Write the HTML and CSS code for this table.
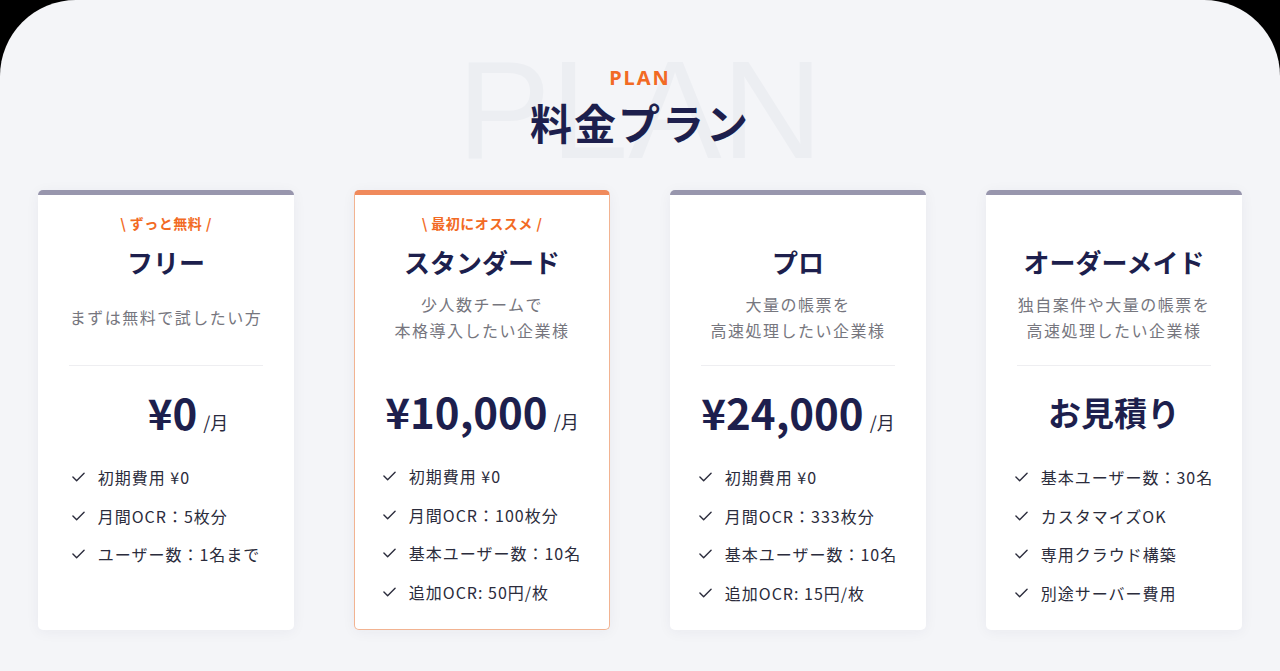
FILE: index.html
```html
<!DOCTYPE html>
<html lang="ja">
<head>
<meta charset="utf-8">
<title>料金プラン</title>
<link rel="stylesheet" href="styles.css">
</head>
<body>
<main class="page">
  <header class="head">
    <span class="head-ghost" aria-hidden="true">PLAN</span>
    <p class="head-label">PLAN</p>
    <h1 class="head-title">料金プラン</h1>
  </header>
  <section class="plans">
    <article class="card">
      <p class="card-tag">\ ずっと無料 /</p>
      <h2 class="card-title">フリー</h2>
      <div class="card-desc"><p>まずは無料で試したい方</p></div>
      <hr class="card-rule">
      <p class="price price--free"><span class="price-num">¥0</span><span class="price-unit">/月</span></p>
      <ul class="features">
        <li><svg class="check" viewBox="0 0 14 10"><polyline points="1,5 5,9 13,1"/></svg>初期費用 ¥0</li>
        <li><svg class="check" viewBox="0 0 14 10"><polyline points="1,5 5,9 13,1"/></svg>月間OCR：5枚分</li>
        <li><svg class="check" viewBox="0 0 14 10"><polyline points="1,5 5,9 13,1"/></svg>ユーザー数：1名まで</li>
      </ul>
    </article>
    <article class="card card--featured">
      <p class="card-tag">\ 最初にオススメ /</p>
      <h2 class="card-title">スタンダード</h2>
      <div class="card-desc"><p>少人数チームで<br>本格導入したい企業様</p></div>
      <hr class="card-rule">
      <p class="price"><span class="price-num">¥10,000</span><span class="price-unit">/月</span></p>
      <ul class="features">
        <li><svg class="check" viewBox="0 0 14 10"><polyline points="1,5 5,9 13,1"/></svg>初期費用 ¥0</li>
        <li><svg class="check" viewBox="0 0 14 10"><polyline points="1,5 5,9 13,1"/></svg>月間OCR：100枚分</li>
        <li><svg class="check" viewBox="0 0 14 10"><polyline points="1,5 5,9 13,1"/></svg>基本ユーザー数：10名</li>
        <li><svg class="check" viewBox="0 0 14 10"><polyline points="1,5 5,9 13,1"/></svg>追加OCR: 50円/枚</li>
      </ul>
    </article>
    <article class="card">
      <p class="card-tag"></p>
      <h2 class="card-title">プロ</h2>
      <div class="card-desc"><p>大量の帳票を<br>高速処理したい企業様</p></div>
      <hr class="card-rule">
      <p class="price"><span class="price-num">¥24,000</span><span class="price-unit">/月</span></p>
      <ul class="features">
        <li><svg class="check" viewBox="0 0 14 10"><polyline points="1,5 5,9 13,1"/></svg>初期費用 ¥0</li>
        <li><svg class="check" viewBox="0 0 14 10"><polyline points="1,5 5,9 13,1"/></svg>月間OCR：333枚分</li>
        <li><svg class="check" viewBox="0 0 14 10"><polyline points="1,5 5,9 13,1"/></svg>基本ユーザー数：10名</li>
        <li><svg class="check" viewBox="0 0 14 10"><polyline points="1,5 5,9 13,1"/></svg>追加OCR: 15円/枚</li>
      </ul>
    </article>
    <article class="card">
      <p class="card-tag"></p>
      <h2 class="card-title">オーダーメイド</h2>
      <div class="card-desc"><p>独自案件や大量の帳票を<br>高速処理したい企業様</p></div>
      <hr class="card-rule">
      <p class="price"><span class="price-quote">お見積り</span></p>
      <ul class="features">
        <li><svg class="check" viewBox="0 0 14 10"><polyline points="1,5 5,9 13,1"/></svg>基本ユーザー数：30名</li>
        <li><svg class="check" viewBox="0 0 14 10"><polyline points="1,5 5,9 13,1"/></svg>カスタマイズOK</li>
        <li><svg class="check" viewBox="0 0 14 10"><polyline points="1,5 5,9 13,1"/></svg>専用クラウド構築</li>
        <li><svg class="check" viewBox="0 0 14 10"><polyline points="1,5 5,9 13,1"/></svg>別途サーバー費用</li>
      </ul>
    </article>
  </section>
</main>
</body>
</html>
```

FILE: styles.css
```css
* { box-sizing: border-box; }
html, body { margin: 0; padding: 0; background: #000; }
body {
  font-family: "Noto Sans CJK JP", "Noto Sans", sans-serif;
  color: #1d1f4d;
}
.page {
  width: 1280px;
  height: 671px;
  background: #f4f5f8;
  border-radius: 76px 76px 0 0;
  overflow: hidden;
  padding-top: 62px;
}
.head {
  position: relative;
  height: 128px;
  display: flex;
  flex-direction: column;
  align-items: center;
}
.head-ghost {
  position: absolute;
  left: 50%;
  top: -30px;
  transform: translateX(-50%);
  font-family: "Liberation Sans", sans-serif;
  font-size: 140px;
  line-height: 156px;
  font-weight: 400;
  color: #eceef2;
  white-space: nowrap;
  z-index: 0;
}
.head-label {
  position: relative;
  margin: 4px 0 0;
  font-family: "Noto Sans", sans-serif;
  font-weight: 700;
  font-size: 20px;
  line-height: 24px;
  letter-spacing: 2px;
  color: #f26a24;
}
.head-title {
  position: relative;
  margin: 6px 0 0;
  font-size: 42px;
  line-height: 52px;
  font-weight: 700;
  letter-spacing: 2px;
  color: #1d1f4d;
}
.plans {
  display: grid;
  grid-template-columns: repeat(4, 256px);
  gap: 60px;
  justify-content: center;
}
.card {
  background: #fff;
  border-top: 5px solid #9896ad;
  border-radius: 5px;
  box-shadow: 0 2px 14px rgba(40, 45, 80, 0.05);
  padding: 18px 0 18px;
  height: 440px;
  display: flex;
  flex-direction: column;
  align-items: center;
}
.card--featured {
  border: 1px solid #f2b391;
  border-top: 5px solid #f08a5c;
}
.card-tag {
  margin: 0;
  height: 20px;
  font-size: 14px;
  line-height: 20px;
  font-weight: 700;
  letter-spacing: 0.5px;
  color: #f26a24;
}
.card-title {
  margin: 14px 0 0;
  font-size: 26px;
  line-height: 30px;
  font-weight: 700;
  color: #1d1f4d;
}
.card-desc {
  margin-top: 14px;
  height: 52px;
  display: flex;
  align-items: center;
  justify-content: center;
}
.card-desc p {
  margin: 0;
  text-align: center;
  font-size: 16px;
  line-height: 26px;
  color: #76767e;
  letter-spacing: 1.5px;
}
.card-rule {
  margin: 22px 0 0;
  width: 194px;
  border: 0;
  height: 1px;
  background: #eeeef1;
}
.price {
  margin: 19px 0 0;
  height: 54px;
  display: flex;
  align-items: baseline;
  justify-content: center;
  gap: 6px;
  line-height: 54px;
}
.price--free { padding-left: 44px; }
.price-num {
  font-size: 42px;
  font-weight: 700;
  color: #1d1f4d;
}
.price-unit {
  font-size: 18px;
  color: #2a2b40;
}
.price-quote {
  font-size: 33px;
  font-weight: 700;
  color: #1d1f4d;
}
.features {
  list-style: none;
  margin: 19px 0 0;
  padding: 0;
}
.features li {
  height: 38.6px;
  display: flex;
  align-items: center;
  gap: 13px;
  font-size: 16px;
  color: #2b2c3c;
  letter-spacing: 1px;
}
.check {
  width: 13px;
  height: 10px;
  flex: none;
}
.check polyline {
  fill: none;
  stroke: #2b2c3c;
  stroke-width: 1.5;
  stroke-linecap: round;
  stroke-linejoin: round;
}
```
